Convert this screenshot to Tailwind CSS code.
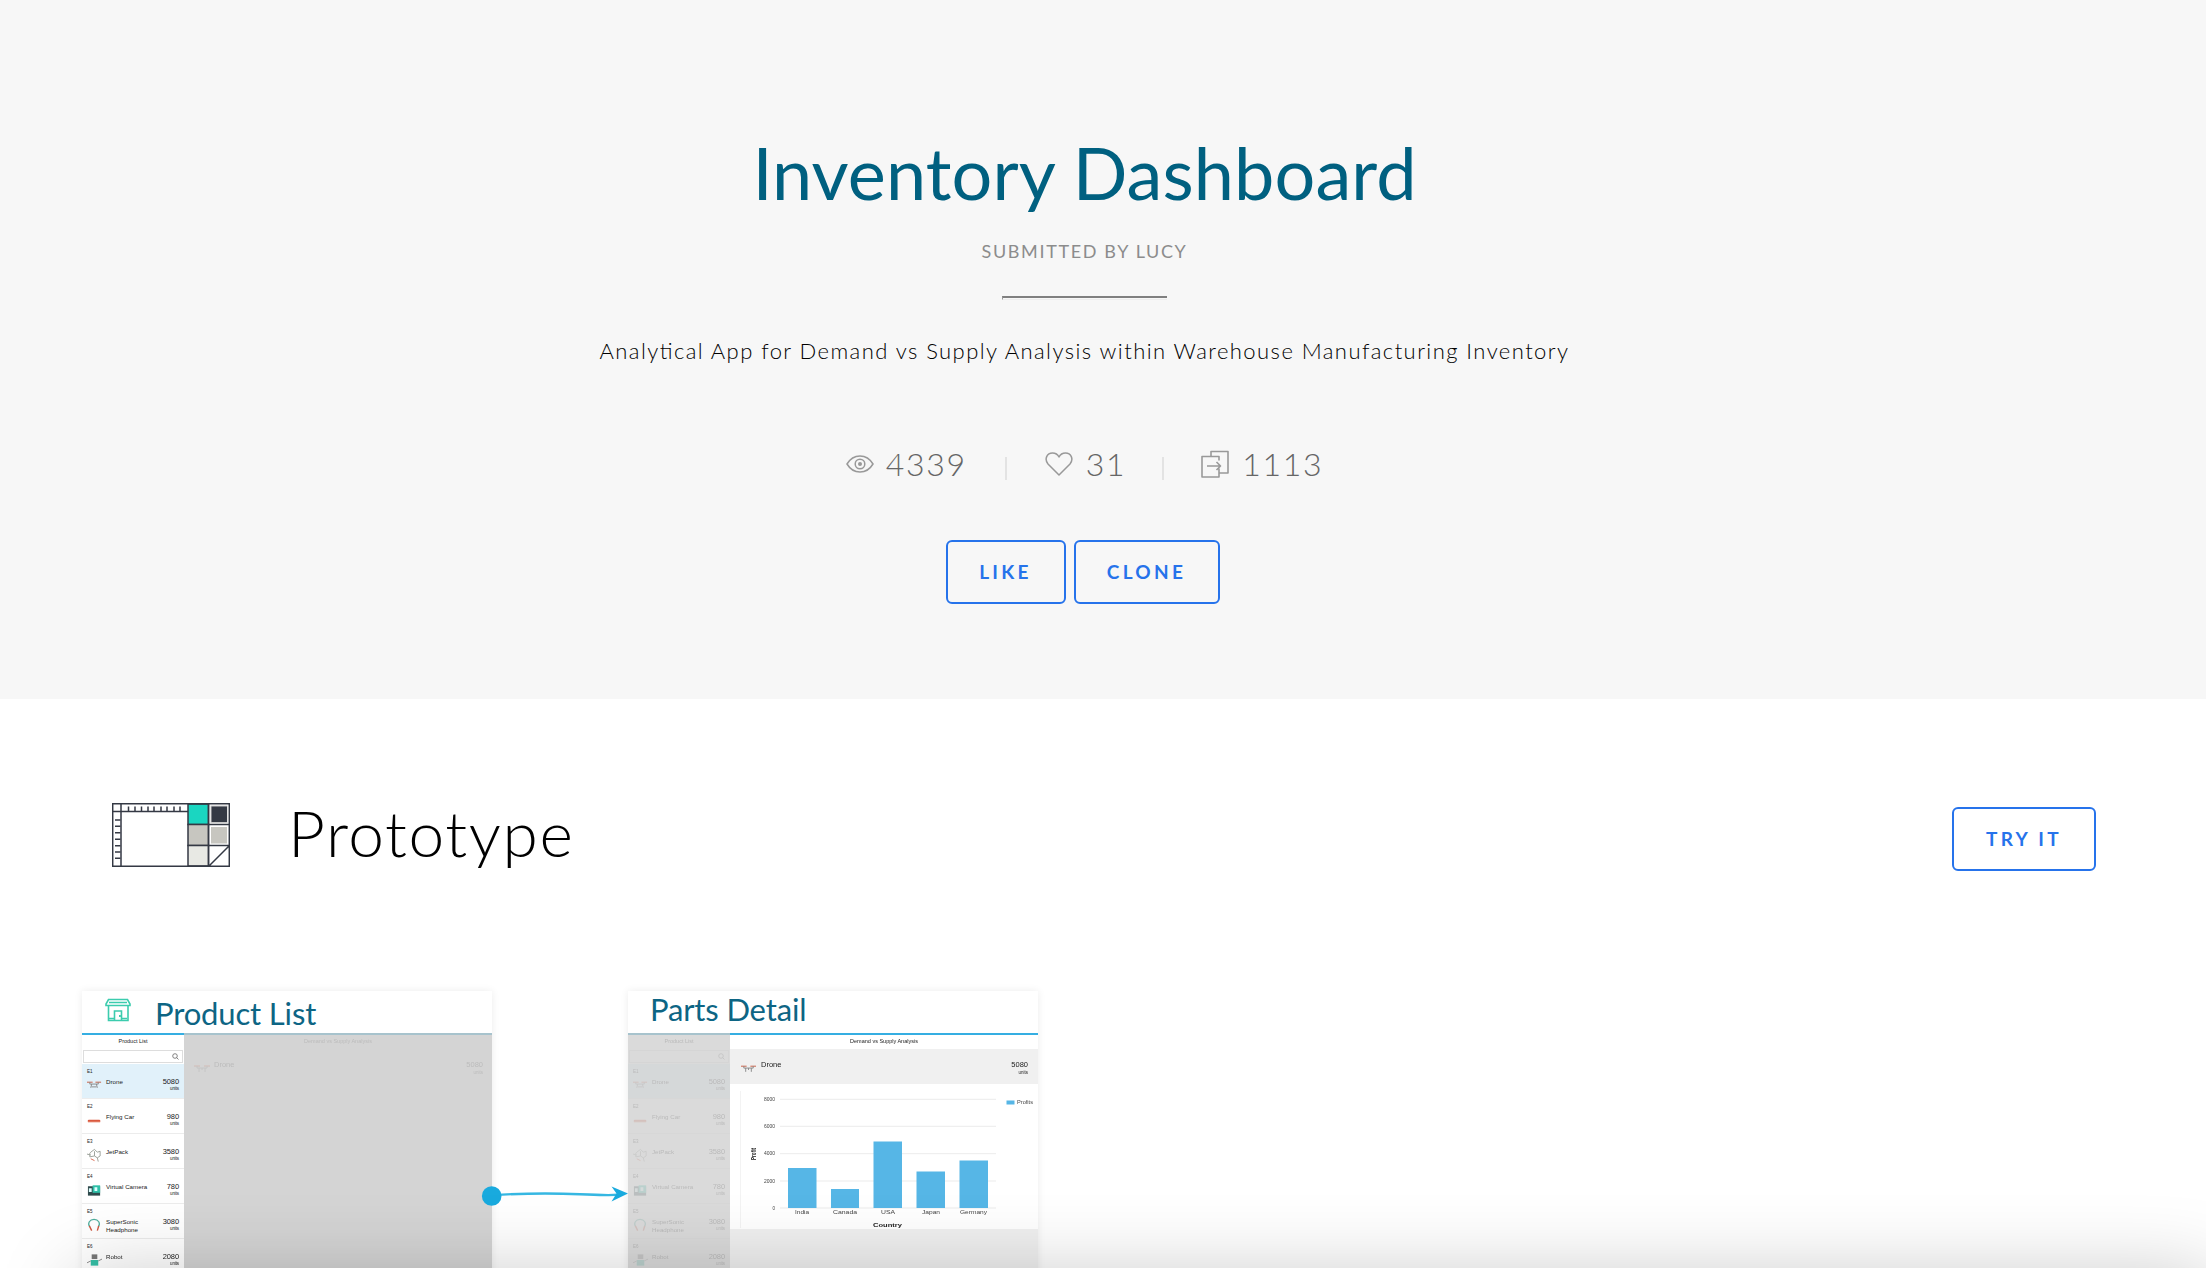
<!DOCTYPE html>
<html lang="en">
<head>
<meta charset="utf-8">
<title>Inventory Dashboard</title>
<script src="https://cdn.jsdelivr.net/npm/@tailwindcss/browser@4"></script>
</head>
<body class="bg-white">
<div class="relative w-[2206px] h-[1268px] overflow-hidden font-['Lato',sans-serif]">
  <header class="h-[699px] bg-[#f7f7f7] pr-[37px] flex flex-col items-center">
    <h1 class="mt-[127px] h-[90px] leading-[90px] text-[72px] tracking-[0.1px] text-[#006080] whitespace-nowrap">Inventory Dashboard</h1>
    <p class="mt-[22px] h-[24px] leading-[24px] text-[18px] tracking-[1.65px] text-[#8c8c8c]">SUBMITTED BY LUCY</p>
    <div class="mt-[33px] w-[165px] h-[4px] border-t-2 border-l border-l-[#999] border-t-[#808080] border-b border-b-[#eee]"></div>
    <p class="mt-[36px] h-[30px] leading-[30px] text-[22px] font-light tracking-[1.44px] text-black [font-feature-settings:'liga'_1]">Analytical App for Demand vs Supply Analysis within Warehouse Manufacturing Inventory</p>
    <div class="mt-[75px] h-[46px] flex items-center text-[32px] font-light tracking-[1.7px] text-[#666]">
      <svg class="w-[28px] h-[18px] mr-[12px]" viewBox="0 0 28 18" fill="none" stroke="#999" stroke-width="1.5"><path d="M1 9C4 4 9 1 14 1S24 4 27 9C24 14 19 17 14 17S4 14 1 9Z"/><circle cx="14" cy="9" r="4.8"/><circle cx="14" cy="9" r="2" fill="#999" stroke="none"/></svg>
      <span>4339</span>
      <i class="ml-[38px] mr-[38px] mt-[8px] w-[2px] h-[23px] bg-[#e3e3e3]"></i>
      <svg class="w-[28px] h-[24px] mr-[13px]" viewBox="0 0 28 24" fill="none" stroke="#999" stroke-width="1.5" stroke-linejoin="round"><path d="M14 23L3 12C-1 7 2 1 7.500 1C11 1 13 3 14 5C15 3 17 1 20.500 1C26 1 29 7 25 12Z"/></svg>
      <span>31</span>
      <i class="ml-[36px] mr-[37px] mt-[8px] w-[2px] h-[23px] bg-[#e3e3e3]"></i>
      <svg class="w-[28px] h-[28px] mr-[13px]" viewBox="0 0 28 28" fill="none" stroke="#999" stroke-width="1.600" stroke-linejoin="round"><path d="M10 6.500V1.500H27V23H18M18 10.500V6.500H1V27H18V18.500M6 16H19.500M15.500 12L19.500 16L15.500 20"/></svg>
      <span>1113</span>
    </div>
    <div class="mt-[53px] mr-[4px] flex gap-[8px] text-[19px] font-bold tracking-[3.3px] text-[#2673eb]">
      <button class="w-[120px] h-[64px] rounded-[6px] border-2 border-[#2673eb]">LIKE</button>
      <button class="w-[146px] h-[64px] rounded-[6px] border-2 border-[#2673eb]">CLONE</button>
    </div>
  </header>
  <section class="h-[292px] pt-[104px] pl-[112px] pr-[110px] flex items-start">
    <svg class="w-[118px] h-[64px]" viewBox="0 0 118 64" fill="none" stroke="#343944" stroke-width="1.500"><path fill="#1ad6c1" d="M76 1h20.500v20.500H76z"/><path fill="#c7c6c0" d="M76 21.500h20.500v21H76z"/><path fill="#e8e9e4" d="M76 42.500h20.500V63H76z"/><path d="M.7.700H117.300V63.300H.7zM9 1V63M1 8.500H76M96.500 1V63M96.500 21.500H117M96.500 42.500H117M97 63L117 43"/><g stroke="none"><path fill="#c9c9c9" d="M98.500 2.500h17v18h-17z"/><path fill="#343944" d="M99.500 3.500h15.500v15.500H99.500z"/><path fill="#c7c6c0" d="M99 24h16v16.500H99z"/></g><path d="M16.500 3.500v5M23 3.500v5M29.500 3.500v5M36 3.500v5M42 3.500v5M49 3.500v5M55 3.500v5M62 3.500v5M68 3.500v5M3 17h5.500M3 23.300h5.500M3 29.700h5.500M3 36.300h5.500M3 42.700h5.500M3 49h5.500M3 55.300h5.500"/></svg>
    <h2 class="ml-[58px] -mt-[10px] h-[80px] leading-[80px] text-[64px] font-light tracking-[1.6px] text-black">Prototype</h2>
    <button class="ml-auto mt-[4px] w-[144px] h-[64px] rounded-[6px] border-2 border-[#2673eb] text-[19px] font-bold tracking-[3.3px] text-[#2673eb]">TRY IT</button>
  </section>
  <main class="pl-[82px] flex gap-[136px]">
    <article class="w-[410px] h-[300px] bg-white shadow-[0_0_8px_rgba(0,0,0,0.08)]">
      <h3 class="h-[42px] flex items-center pl-[23px] text-[31px] tracking-[-0.15px] text-[#0d6584] whitespace-nowrap">
        <svg class="w-[26px] h-[24px] -mt-[4px]" viewBox="0 0 26 24" fill="none" stroke="#3cccae" stroke-width="1.600"><path d="M3.500 1.500H22.500L25 6V7.500H1V6ZM3.500 8V22.500H23V8M9.500 22V13H16.500V22M3 20.500H9M17 20.500H22M4 4.500H22M14.800 17v2"/></svg>
        <span class="ml-[24px] mt-[3px]">Product List</span></h3>
      <div class="flex h-[258px] font-['Liberation_Sans',sans-serif] blur-[0.5px]">
        <div class="w-[102px] border-t-2 border-[#35aee2]" data-list></div>
        <div class="flex-1 border-t-2 border-t-[#a7c3cd] bg-[#d4d4d4] text-[#bcbcbc]">
          <p class="h-[14px] pt-[1px] leading-[10px] text-[5.5px] text-center">Demand vs Supply Analysis</p>
          <div class="flex h-[35px] pl-[10px] pr-[9px] pt-[10px] text-[7.5px] leading-[12px]">
            <svg class="w-[16px] h-[8px] mt-[6px] mr-[4px] opacity-20" viewBox="0 0 16 8" fill="none"><path stroke="#c85a40" d="M0 1h6M10 1h6"/><path stroke="#888" d="M3 1v2h10V1M5 3v4M11 3v4M8 3v2"/></svg>Drone
            <p class="ml-auto text-right">5080<span class="block text-[4.5px] leading-[3px]">units</span></p>
          </div>
        </div>
      </div>
    </article>
    <article class="w-[410px] h-[300px] bg-white shadow-[0_0_8px_rgba(0,0,0,0.08)]">
      <h3 class="h-[42px] pl-[22px] leading-[36px] text-[31px] tracking-[-0.15px] text-[#0d6584] whitespace-nowrap">Parts Detail</h3>
      <div class="flex h-[258px] font-['Liberation_Sans',sans-serif] blur-[0.5px]">
        <div class="w-[102px] border-t-2 border-[#a7c3cd] bg-[#d4d4d4]"><div class="opacity-15" data-list></div></div>
        <div class="w-[308px] border-t-2 border-t-[#35aee2] bg-[#f0f0f0] text-[#222]">
          <p class="h-[14px] pt-[1px] leading-[10px] text-[5.5px] text-center bg-white">Demand vs Supply Analysis</p>
          <div class="flex h-[35px] pl-[11px] pr-[10px] pt-[10px] text-[7.5px] leading-[12px]">
            <svg class="w-[15px] h-[8px] mt-[6px] mr-[5px]" viewBox="0 0 16 8" fill="none"><path stroke="#c85a40" d="M0 1h6M10 1h6"/><path stroke="#888" d="M3 1v2h10V1M5 3v4M11 3v4M8 3v2"/></svg>Drone
            <p class="ml-auto text-right">5080<span class="block text-[4.5px] leading-[3px]">units</span></p>
          </div>
          <svg class="block w-[308px] h-[145px]" viewBox="730 1085 308 145" font-size="4.5" fill="#444" font-family="Liberation Sans, sans-serif">
            <path fill="#fff" d="M730 1085h308v145H730z"/>
            <path stroke="#e6e6e6" stroke-width=".8" d="M780 1100.300h216M780 1127.300h216M780 1154.700h216M780 1182h216M780 1209h216"/><path stroke="#f3f3f3" d="M740.500 1092V1229"/>
            <g fill="#56b6e6"><path d="M788 1169h28.500v40H788zM831 1190h28v19h-28zM873.500 1142.500H902V1209h-28.500zM916.500 1172.500H945V1209h-28.500zM959.500 1161.500h28.500v47.500h-28.500zM1006.500 1101.500h8v4h-8z"/></g>
            <g text-anchor="end"><text x="775" y="1102" textLength="11" lengthAdjust="spacingAndGlyphs">8000</text><text x="775" y="1129" textLength="11" lengthAdjust="spacingAndGlyphs">6000</text><text x="775" y="1156.400" textLength="11" lengthAdjust="spacingAndGlyphs">4000</text><text x="775" y="1183.700" textLength="11" lengthAdjust="spacingAndGlyphs">2000</text><text x="775" y="1211">0</text></g>
            <text x="795" y="1215" textLength="14" lengthAdjust="spacingAndGlyphs">India</text><text x="833" y="1215" textLength="24" lengthAdjust="spacingAndGlyphs">Canada</text><text x="881" y="1215" textLength="14" lengthAdjust="spacingAndGlyphs">USA</text><text x="922" y="1215" textLength="18" lengthAdjust="spacingAndGlyphs">Japan</text><text x="960" y="1215" textLength="27" lengthAdjust="spacingAndGlyphs">Germany</text><text x="1017" y="1105" textLength="16" lengthAdjust="spacingAndGlyphs">Profits</text>
            <g font-weight="bold" fill="#222"><text x="873" y="1228" font-size="5" textLength="29" lengthAdjust="spacingAndGlyphs">Country</text><text transform="translate(756 1161) rotate(-90)" font-size="7" textLength="12" lengthAdjust="spacingAndGlyphs">Profit</text></g>
          </svg>
        </div>
      </div>
    </article>
  </main>
  <svg class="absolute left-[480px] top-[1180px] w-[150px] h-[32px]" viewBox="480 1180 150 32"><path d="M492 1195Q540 1192.500 580 1194.300T622 1193.500" fill="none" stroke="#36b7e2" stroke-width="2.400"/><circle cx="491.700" cy="1196" r="9.800" fill="#19aade"/><path fill="#19aade" d="M628 1193.500L611.500 1186.500L616.500 1193.500L611.500 1201.500Z"/></svg>
  <div class="absolute left-[76px] right-[-10px] top-[1275px] h-[100px] shadow-[0_0_80px_rgba(0,0,0,0.22)]"></div>
</div>
<script>
const art = {
  drone: '<path stroke="#c85a40" d="M0 4h6M9 4h6"/><path stroke="#888" d="M3 4v2h9V4M5 6l-1 4M10 6l1 4M5 9h5"/>',
  car: '<path stroke="#d9583f" stroke-width="2.500" stroke-linecap="round" d="M2 8h11"/><path stroke="#e8896f" d="M1 9h13"/>',
  jet: '<path stroke="#9a9f98" d="M4 4l4-3 3 3 3-1v5l-3 2-3-2-5 1V5zM0 6l4 1M8 3v5M11 10l1 4"/><path stroke="#d9684f" d="M4 11l4 2"/>',
  camera: '<path fill="#2f4a4c" d="M1 3h13v10H1z"/><path fill="#2fc0a8" d="M6 2h8v8H6z"/><path fill="#dff" d="M2 5h3v4H2zM8 4h3v4H8z"/>',
  phone: '<path stroke="#4fae9d" stroke-width="1.300" d="M3 9C0 5 3 1 7.500 1S15 5 12 9"/><path stroke="#cf5b45" stroke-width="1.500" d="M2.500 8L5 13M12.500 8L11 13"/>',
  robot: '<path fill="#777" d="M5 1h6v5H5z"/><path fill="#35bfa6" d="M4 7h8v6H4z"/><path stroke="#888" d="M4 8L0 10M12 8l4-2"/>'
};
const rows = [['E1','Drone','5080','drone'],['E2','Flying Car','980','car'],['E3','JetPack','3580','jet'],['E4','Virtual Camera','780','camera'],['E5','SuperSonic<br>Headphone','3080','phone'],['E6','Robot','2080','robot']];
document.querySelectorAll('[data-list]').forEach(el => {
  el.innerHTML = `<p class="h-[14px] pt-[1px] leading-[10px] text-[5.5px] text-center text-[#222] bg-white">Product List</p>
  <div class="h-[15px] px-[1px] pt-[1px] bg-white"><div class="h-[13px] border border-[#ddd] flex justify-end pr-[3px] pt-[2px]"><svg class="w-[7px] h-[7px]" viewBox="0 0 7 7" fill="none" stroke="#666" stroke-width=".8"><circle cx="3" cy="3" r="2.300"/><path d="M4.600 4.600L6.500 6.500"/></svg></div></div>` +
  rows.map((r, i) => `<div class="h-[35px] border-b border-[#ececec] pt-[5px] pl-[5px] pr-[5px] text-[#222] ${i ? 'bg-white' : 'bg-[#e1f1fa]'}"><p class="text-[4.5px] leading-[6px] h-[6px]">${r[0]}</p>
  <div class="flex text-[7px] leading-[8px] pt-[3px]"><svg class="w-[15px] h-[14px] mr-[4px] shrink-0" viewBox="0 0 16 14" fill="none">${art[r[3]]}</svg><span class="w-[44px] text-[6.2px] whitespace-nowrap">${r[1]}</span><p class="ml-auto text-right text-[7.5px] tracking-[-0.1px]">${r[2]}<span class="block text-[4.5px] leading-[5px]">units</span></p></div></div>`).join('');
});
</script>
</body>
</html>
